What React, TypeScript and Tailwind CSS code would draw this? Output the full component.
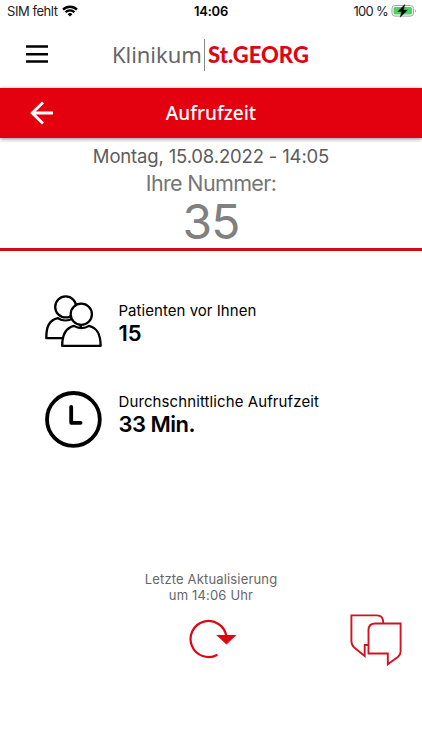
import React from 'react';

const WifiIcon = () => (
  <svg width="16" height="12" viewBox="0 0 16 12" fill="none" stroke="#000" strokeWidth="2.3">
    <path d="M1 4.6a10 10 0 0 1 14 0" />
    <path d="M3.5 7.3a6.3 6.3 0 0 1 9 0" />
    <path d="M8 11.6 5.6 9.2a3.4 3.4 0 0 1 4.8 0Z" fill="#000" stroke="none" />
  </svg>
);

const BatteryIcon = () => (
  <svg width="26" height="14" viewBox="0 0 26 14" fill="none">
    <rect x="1" y="1.5" width="21.5" height="10.6" rx="3" stroke="#a3a3a3" />
    <rect x="2.5" y="3" width="18.5" height="7.6" rx="1.7" fill="#4cd265" />
    <path d="M24 5.2v3.4c1.2-.6 1.2-2.8 0-3.4Z" fill="#a3a3a3" />
    <path d="M13.8.4 6.8 7.6h3.9L9.2 13.2l7.2-7.1h-4Z" fill="#000" stroke="#000" strokeWidth="0.4" />
  </svg>
);

const MenuIcon = () => (
  <svg width="22" height="20" viewBox="0 0 22 20" stroke="#000" strokeWidth="2.5">
    <path d="M0 2.600h22M0 10.200h22M0 17.600h22" />
  </svg>
);

const PatientsIcon = () => (
  <svg width="58" height="54" viewBox="0 0 58 54" fill="#fff" stroke="#000" strokeWidth="2.3" strokeLinejoin="round">
    <path d="M2.3 44.200c0-11.500 2.600-18 11.700-20 4.500 3 10.500 3 15 0 4 1 7 4 8 9v11Z" />
    <circle cx="21.7" cy="12.9" r="10.5" />
    <path d="M18.200 51.900c0-11.500 3.200-18 11.800-20 4.400 3 10.600 3 15 0C53.600 34 56.600 40.400 56.600 51.900Z" />
    <circle cx="37.3" cy="20.200" r="10.600" />
  </svg>
);

const ClockIcon = () => (
  <svg width="58" height="58" viewBox="0 0 58 58" fill="none" stroke="#000" strokeWidth="3.8" strokeLinecap="round" strokeLinejoin="round">
    <circle cx="29.4" cy="29.4" r="26.4" />
    <path d="M27.2 17v15.800h9.400" />
  </svg>
);

const RefreshIcon = () => (
  <svg width="48" height="40" viewBox="0 0 48 40" fill="none">
    <path d="M28.4 35.700A18 18 0 1 1 37.400 17.500" stroke="#dc0712" strokeWidth="2.2" />
    <path d="M27.2 16H47.500L37.500 25.500Z" fill="#dc0712" />
  </svg>
);

const ChatIcon = () => (
  <svg width="52" height="52" viewBox="0 0 52 52" fill="#fff" stroke="#d01520" strokeWidth="1.9">
    <path d="M1.400 1.400H27q6.200 0 6.200 7V31H14.700V42L4.200 33.500Q1.400 31 1.400 27Z" />
    <path d="M25.500 9.500H50.600V37.500q0 3-2.500 5.300L37.800 50.300V39.500H18.500V16Q18.500 9.500 25.500 9.500Z" />
  </svg>
);

interface InfoRowProps {
  icon: React.ReactNode;
  label: string;
  value: string;
  textClass: string;
  labelClass?: string;
  valueClass?: string;
}

const InfoRow: React.FC<InfoRowProps> = ({ icon, label, value, textClass, labelClass = '', valueClass = '' }) => (
  <div className="flex h-[58px] items-center pl-[44px]">
    {icon}
    <div className={`ml-[16.5px] whitespace-nowrap text-black ${textClass}`}>
      <p className={`text-[15px] leading-[22px] ${labelClass}`}>{label}</p>
      <p className={`text-[22px] leading-[23px] font-semibold ${valueClass}`}>{value}</p>
    </div>
  </div>
);

export default function App() {
  return (
    <div className="flex h-[750px] w-[422px] flex-col overflow-hidden bg-white font-['Inter',sans-serif]">
      {/* Status bar */}
      <div className="grid h-[22px] shrink-0 grid-cols-3 items-center pr-[5px] pl-[7px] text-[13px] leading-[22px] text-[#222]">
        <div className="flex items-center gap-[4px]">
          <span className="w-[51px] tracking-[-0.45px]">SIM fehlt</span>
          <WifiIcon />
        </div>
        <span className="pr-[2px] text-center font-semibold tracking-[-0.2px] text-black">14:06</span>
        <div className="flex items-center justify-end gap-[3px]">
          <span className="tracking-[-0.7px]">100 %</span>
          <BatteryIcon />
        </div>
      </div>

      {/* Header */}
      <header className="flex h-[66px] shrink-0 items-center pl-[26px]">
        <button className="-mt-[3px] w-[22px]" aria-label="Menü">
          <MenuIcon />
        </button>
        <div className="ml-[64px] flex h-[32px] items-center text-[22px] leading-[32px] whitespace-nowrap">
          <span className="-mt-[2px] w-[92px] font-['Noto_Sans',sans-serif] tracking-[-0.05px] text-[#666]">
            Klinikum
          </span>
          <span className="h-[32px] w-px bg-[#888]" />
          <span className="ml-[3px] font-['Lato',sans-serif] font-black text-[#dc0712]">St.GEORG</span>
        </div>
      </header>

      {/* Title bar */}
      <div className="relative grid h-[50px] shrink-0 grid-cols-[1fr_auto_1fr] items-center bg-[#e3000f] px-[30px] shadow-[0_1px_4px_rgba(0,0,0,0.45)]">
        <svg width="24" height="24" viewBox="0 0 24 24" fill="none" stroke="#fff" strokeWidth="2.8">
          <path d="M23 12H2M13 1.500 2.200 12 13 22.500" />
        </svg>
        <h1 className="font-['Noto_Sans',sans-serif] text-[19px] font-medium text-white">Aufrufzeit</h1>
      </div>

      {/* Number */}
      <section className="h-[113px] shrink-0 border-b-[3px] border-[#d00c18] text-center whitespace-nowrap">
        <p className="mt-[6px] text-[18.5px] leading-[24px] tracking-[-0.16px] text-[#5c5c5c]">
          Montag, 15.08.2022 - 14:05
        </p>
        <p className="mt-[1px] text-[21.5px] leading-[28px] tracking-[-0.65px] text-[#757575]">Ihre Nummer:</p>
        <p className="text-[48px] leading-[50px] tracking-[-1px] text-[#808080]">35</p>
      </section>

      <div className="mt-[41px] flex flex-col gap-[40px]">
        <InfoRow
          icon={<PatientsIcon />}
          label="Patienten vor Ihnen"
          value="15"
          textClass="mt-[3px]"
          labelClass="tracking-[0.04px]"
        />
        <InfoRow
          icon={<ClockIcon />}
          label="Durchschnittliche Aufrufzeit"
          value="33 Min."
          textClass="-mt-[11px]"
          labelClass="tracking-[0.1px]"
          valueClass="tracking-[-0.5px]"
        />
      </div>

      {/* Last update */}
      <footer className="mt-[123px] text-center text-[13px] leading-[16px] tracking-[0.16px] text-[#666]">
        <p>Letzte Aktualisierung</p>
        <p>um 14:06 Uhr</p>
        <div className="mt-[11px] flex items-start">
          <div className="mt-[5px] ml-[189px]">
            <RefreshIcon />
          </div>
          <div className="ml-[113px]">
            <ChatIcon />
          </div>
        </div>
      </footer>
    </div>
  );
}
